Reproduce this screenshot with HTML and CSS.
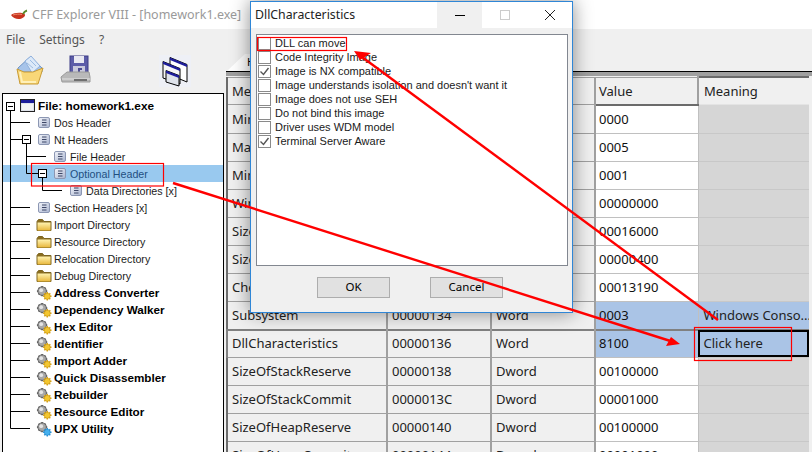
FILE: index.html
```html
<!DOCTYPE html>
<html lang="en">
<head>
    <meta charset="UTF-8">
    <title>CFF Explorer VIII - [homework1.exe]</title>
    <link rel="stylesheet" href="styles.css">
</head>
<body>
    <svg class="defs" width="0" height="0">
        <defs>
            <linearGradient id="docFill" x1="0" y1="0" x2="1" y2="1">
                <stop offset="0" stop-color="#f4f6fb"/>
                <stop offset="1" stop-color="#a9b4cf"/>
            </linearGradient>
            <linearGradient id="folderFill" x1="0" y1="0" x2="0" y2="1">
                <stop offset="0" stop-color="#fff3b0"/>
                <stop offset="1" stop-color="#e8b73c"/>
            </linearGradient>
            <symbol id="doc" viewBox="0 0 12 11">
                <rect x="0.5" y="0.5" width="11" height="10" rx="1.5" fill="url(#docFill)" stroke="#8c97b3"/>
                <path d="M4 3h4.500M4 5.500h4.500M4 8h4.500" stroke="#3d4666" stroke-width="1"/>
            </symbol>
            <symbol id="folder" viewBox="0 0 16 14">
                <path d="M1 3.500V12.500H15V3.500H8L6.500 1.500H2.500Z" fill="#8a6d1f" stroke="#7c6420"/>
                <rect x="1.500" y="4.500" width="13" height="8" fill="url(#folderFill)"/>
            </symbol>
            <symbol id="tool" viewBox="0 0 17 17">
                <path d="M6.500 1v11M1 6.500h11M2.700 2.700l7.600 7.600M10.300 2.700l-7.600 7.600" stroke="#6e6e6e" stroke-width="2"/>
                <circle cx="6.500" cy="6.500" r="4.500" fill="#a8a8a8" stroke="#5a5a5a"/>
                <circle cx="5.500" cy="5.500" r="2" fill="#e4e4e4"/>
                <path d="M12 7.500v9M7.500 12h9M8.800 8.800l6.400 6.400M15.200 8.800l-6.400 6.400" stroke="#e0a91a" stroke-width="1.600"/>
                <circle cx="12" cy="12" r="3.200" fill="#f4c62e" stroke="#b98a10" stroke-width="0.600"/>
            </symbol>
            <symbol id="toolBlue" viewBox="0 0 17 17">
                <path d="M6.500 1v11M1 6.500h11M2.700 2.700l7.600 7.600M10.300 2.700l-7.600 7.600" stroke="#6e6e6e" stroke-width="2"/>
                <circle cx="6.500" cy="6.500" r="4.500" fill="#a8a8a8" stroke="#5a5a5a"/>
                <circle cx="5.500" cy="5.500" r="2" fill="#e4e4e4"/>
                <path d="M12 7.500v9M7.500 12h9M8.800 8.800l6.400 6.400M15.200 8.800l-6.400 6.400" stroke="#2b97dc" stroke-width="1.600"/>
                <circle cx="12" cy="12" r="3.200" fill="#45b0ee" stroke="#1c7cc0" stroke-width="0.600"/>
            </symbol>
        </defs>
    </svg>

    <div class="app">
        <header class="titlebar">
            <svg class="chili" width="18" height="12" viewBox="0 0 18 12">
                <path d="M1 6C3 4 8 3.500 12 4C15 4.500 16 6 14 8C11 11 4 11 1 6Z" fill="#c8341f"/>
                <path d="M3 6C6 5 9 5 12 5.500" stroke="#ee8a6a" fill="none"/>
                <path d="M13 5C14 3 15 2 17 1.500" stroke="#5a8a2a" stroke-width="2" fill="none"/>
            </svg>
            <span>CFF Explorer VIII - [homework1.exe]</span>
        </header>

        <nav class="menubar">
            <span>File</span>
            <span>Settings</span>
            <span>?</span>
        </nav>

        <div class="main">
            <aside class="side">
                <div class="toolbar">
                    <svg class="tool-open" width="28" height="30" viewBox="0 0 28 30">
                        <path d="M2 13L14 2L26 13V17H2Z" fill="#a7c4ea" stroke="#6f95c6"/>
                        <path d="M9 6L15 1L24 11L16 18Z" fill="#dce9f8" stroke="#8fb0dc"/>
                        <path d="M14 5L20 11M11 8L17 13" stroke="#9dbce2"/>
                        <path d="M1 14L4 29H22L27 13L17 17H8Z" fill="#f8d778" stroke="#c99b35"/>
                        <path d="M4 17L6 27H20" fill="none" stroke="#fff0b8" stroke-width="2"/>
                    </svg>
                    <svg class="tool-save" width="32" height="30" viewBox="0 0 32 30">
                        <rect x="10" y="1" width="18" height="20" fill="#5c5ca8" stroke="#3d3d85"/>
                        <rect x="14" y="1" width="10" height="7" fill="#e9e9f2"/>
                        <rect x="13" y="11" width="12" height="10" fill="#c9c9dc"/>
                        <path d="M18 13h4v2h-2v4h-2Z" fill="#4c4c92"/>
                        <path d="M1 22L7 17H29L30 22V27H2Z" fill="#b9b9b9" stroke="#9a9a9a"/>
                        <path d="M2 24H30" stroke="#e2e2e2"/>
                        <path d="M14 25h13" stroke="#6f6f6f" stroke-width="2"/>
                    </svg>
                    <svg class="tool-windows" width="32" height="32" viewBox="0 0 32 32">
                        <rect width="32" height="32" fill="#eef0f6"/>
                        <path d="M11 2.500L28 9.500V27L11 20Z" fill="#fff" stroke="#000"/>
                        <path d="M11 2.500L28 9.500V12L11 5Z" fill="#1d1d9a"/>
                        <path d="M4 6.500L21 13.500V29L4 23Z" fill="#f6f6f6" stroke="#000"/>
                        <path d="M4 6.500L21 13.500V16L4 9Z" fill="#1d1d9a"/>
                        <path d="M7 15.500L20 20.500V31L7 27Z" fill="#dfe3ea" stroke="#000"/>
                        <path d="M7 15.500L20 20.500V23L7 18Z" fill="#1d1d9a"/>
                    </svg>
                </div>

                <div class="tree">
                    <div class="node node-file">
                        <svg class="ico-file" width="15" height="13" viewBox="0 0 15 13">
                            <rect x="0.500" y="0.500" width="14" height="12" fill="#dfe3ea" stroke="#222"/>
                            <rect x="1" y="1" width="13" height="3" fill="#1d1d9a"/>
                            <rect x="2" y="5" width="11" height="6" fill="#f4f4f4"/>
                        </svg>
                        <b>File: homework1.exe</b>
                    </div>
                    <div class="node lvl-1"><svg class="ico-doc"><use href="#doc"/></svg>Dos Header</div>
                    <div class="node lvl-1"><svg class="ico-doc"><use href="#doc"/></svg>Nt Headers</div>
                    <div class="node lvl-2"><svg class="ico-doc"><use href="#doc"/></svg>File Header</div>
                    <div class="node lvl-2 selected"><svg class="ico-doc"><use href="#doc"/></svg>Optional Header</div>
                    <div class="node lvl-3"><svg class="ico-doc"><use href="#doc"/></svg>Data Directories [x]</div>
                    <div class="node lvl-1"><svg class="ico-doc"><use href="#doc"/></svg>Section Headers [x]</div>
                    <div class="node lvl-0"><svg class="ico-16"><use href="#folder"/></svg>Import Directory</div>
                    <div class="node lvl-0"><svg class="ico-16"><use href="#folder"/></svg>Resource Directory</div>
                    <div class="node lvl-0"><svg class="ico-16"><use href="#folder"/></svg>Relocation Directory</div>
                    <div class="node lvl-0"><svg class="ico-16"><use href="#folder"/></svg>Debug Directory</div>
                    <div class="node lvl-0 bold"><svg class="ico-16"><use href="#tool"/></svg>Address Converter</div>
                    <div class="node lvl-0 bold"><svg class="ico-16"><use href="#tool"/></svg>Dependency Walker</div>
                    <div class="node lvl-0 bold"><svg class="ico-16"><use href="#tool"/></svg>Hex Editor</div>
                    <div class="node lvl-0 bold"><svg class="ico-16"><use href="#tool"/></svg>Identifier</div>
                    <div class="node lvl-0 bold"><svg class="ico-16"><use href="#tool"/></svg>Import Adder</div>
                    <div class="node lvl-0 bold"><svg class="ico-16"><use href="#tool"/></svg>Quick Disassembler</div>
                    <div class="node lvl-0 bold"><svg class="ico-16"><use href="#tool"/></svg>Rebuilder</div>
                    <div class="node lvl-0 bold"><svg class="ico-16"><use href="#tool"/></svg>Resource Editor</div>
                    <div class="node lvl-0 bold"><svg class="ico-16"><use href="#toolBlue"/></svg>UPX Utility</div>

                    <!-- connector lines, page coordinates -->
                    <svg class="tree-lines" viewBox="3 94 220 358">
                        <path d="M10.500 110V428.500M10.500 122.500H30M10.500 139.500H22M10.500 207.500H30M10.500 224.500H30M10.500 241.500H30M10.500 258.500H30M10.500 275.500H30M10.500 292.500H30M10.500 309.500H30M10.500 326.500H30M10.500 343.500H30M10.500 360.500H30M10.500 377.500H30M10.500 394.500H30M10.500 411.500H30M10.500 428.500H30" stroke="#000" fill="none"/>
                        <path d="M26.500 144V173.500H38M26.500 156.500H46M42.500 177V190.500H62" stroke="#000" fill="none"/>
                        <g fill="#fff" stroke="#000">
                            <rect x="6.500" y="102.500" width="8" height="8"/>
                            <rect x="22.500" y="135.500" width="8" height="8"/>
                            <rect x="38.500" y="169.500" width="8" height="8"/>
                        </g>
                        <path d="M8 106.500h5M24 139.500h5M40 173.500h5" stroke="#000"/>
                    </svg>
                </div>
            </aside>

            <section class="content">
                <div class="tabstrip">
                    <div class="tab">Header</div>
                </div>
                <div class="grid-top"></div>
                <table class="grid">
                    <colgroup>
                        <col class="col-member"><col class="col-offset"><col class="col-size"><col class="col-value"><col class="col-meaning">
                    </colgroup>
                    <thead>
                        <tr><th>Member</th><th>Offset</th><th>Size</th><th class="val">Value</th><th class="pressed">Meaning</th></tr>
                    </thead>
                    <tbody>
                        <tr><td>MinorImageVersion</td><td>0000011E</td><td>Word</td><td class="val">0000</td><td class="mean"></td></tr>
                        <tr><td>MajorSubsystemVersion</td><td>00000120</td><td>Word</td><td class="val">0005</td><td class="mean"></td></tr>
                        <tr><td>MinorSubsystemVersion</td><td>00000122</td><td>Word</td><td class="val">0001</td><td class="mean"></td></tr>
                        <tr><td>Win32VersionValue</td><td>00000124</td><td>Dword</td><td class="val">00000000</td><td class="mean"></td></tr>
                        <tr><td>SizeOfImage</td><td>00000128</td><td>Dword</td><td class="val">00016000</td><td class="mean"></td></tr>
                        <tr><td>SizeOfHeaders</td><td>0000012C</td><td>Dword</td><td class="val">00000400</td><td class="mean"></td></tr>
                        <tr><td>CheckSum</td><td>00000130</td><td>Dword</td><td class="val">00013190</td><td class="mean"></td></tr>
                        <tr class="marked"><td>Subsystem</td><td>00000134</td><td>Word</td><td class="val">0003</td><td class="mean">Windows Conso...</td></tr>
                        <tr class="marked current"><td>DllCharacteristics</td><td>00000136</td><td>Word</td><td class="val">8100</td><td class="mean focus">Click here</td></tr>
                        <tr><td>SizeOfStackReserve</td><td>00000138</td><td>Dword</td><td class="val">00100000</td><td class="mean"></td></tr>
                        <tr><td>SizeOfStackCommit</td><td>0000013C</td><td>Dword</td><td class="val">00001000</td><td class="mean"></td></tr>
                        <tr><td>SizeOfHeapReserve</td><td>00000140</td><td>Dword</td><td class="val">00100000</td><td class="mean"></td></tr>
                        <tr><td>SizeOfHeapCommit</td><td>00000144</td><td>Dword</td><td class="val">00001000</td><td class="mean"></td></tr>
                    </tbody>
                </table>
            </section>
        </div>
    </div>

    <div class="dialog">
        <div class="dialog-title">
            <span class="dialog-name">DllCharacteristics</span>
            <div class="winbtns">
                <div class="winbtn minimize"><svg width="12" height="12" viewBox="0 0 12 12"><path d="M1 6.500H11" stroke="#000"/></svg></div>
                <div class="winbtn"><svg width="12" height="12" viewBox="0 0 12 12"><rect x="1.500" y="1.500" width="9" height="9" fill="none" stroke="#ccc"/></svg></div>
                <div class="winbtn"><svg width="12" height="12" viewBox="0 0 12 12"><path d="M1 1L11 11M11 1L1 11" stroke="#222"/></svg></div>
            </div>
        </div>
        <div class="dialog-body">
            <div class="checklist">
                <label class="check"><i class="box"></i>DLL can move</label>
                <label class="check"><i class="box"></i>Code Integrity Image</label>
                <label class="check"><i class="box on"><svg width="11" height="11" viewBox="0 0 11 11"><path d="M1.500 5.500L4.500 8.500L9.500 2" fill="none" stroke="#555" stroke-width="1.400"/></svg></i>Image is NX compatible</label>
                <label class="check"><i class="box"></i>Image understands isolation and doesn't want it</label>
                <label class="check"><i class="box"></i>Image does not use SEH</label>
                <label class="check"><i class="box"></i>Do not bind this image</label>
                <label class="check"><i class="box"></i>Driver uses WDM model</label>
                <label class="check"><i class="box on"><svg width="11" height="11" viewBox="0 0 11 11"><path d="M1.500 5.500L4.500 8.500L9.500 2" fill="none" stroke="#555" stroke-width="1.400"/></svg></i>Terminal Server Aware</label>
            </div>
            <div class="dialog-actions">
                <div class="btn">OK</div>
                <div class="btn">Cancel</div>
            </div>
        </div>
    </div>

    <!-- red annotations drawn on top of the screenshot -->
    <svg class="notes" width="812" height="452" viewBox="0 0 812 452">
        <g fill="none" stroke="#f00" stroke-width="1.200">
            <rect x="31.500" y="163.500" width="132" height="22.500"/>
            <rect x="257.500" y="37.500" width="89" height="13"/>
            <rect x="694.500" y="327.500" width="97" height="33"/>
        </g>
        <g stroke="#f00" stroke-width="2.400">
            <path d="M173 183L672 341.500"/>
            <path d="M718 320L362 57"/>
        </g>
        <path d="M680 344L666 346L671 337Z" fill="#f00"/>
        <path d="M354 51L371 53L360 60Z" fill="#f00"/>
    </svg>
</body>
</html>
```

FILE: styles.css
```css
html, body {
    margin: 0;
    height: 452px;
    overflow: hidden;
}

body {
    position: relative;
    background: #f0f0f0;
    color: #000;
    font-family: "Noto Sans", "Liberation Sans", sans-serif;
}

.defs {
    position: absolute;
}

.app {
    display: flex;
    flex-direction: column;
    height: 452px;
}

.titlebar {
    height: 29px;
    flex: none;
    display: flex;
    align-items: center;
    gap: 4px;
    padding-left: 10px;
    background: #fff;
    color: #9a9a9a;
    font-size: 12.500px;
}

.menubar {
    height: 21px;
    flex: none;
    display: flex;
    align-items: center;
    gap: 14px;
    padding-left: 6px;
    color: #555;
    font-size: 12px;
}

.main {
    flex: 1;
    display: flex;
    min-height: 0;
}

.side {
    width: 224px;
    flex: none;
    display: flex;
    flex-direction: column;
    padding-left: 2px;
    box-sizing: border-box;
}

.toolbar {
    height: 43px;
    flex: none;
    display: flex;
    align-items: flex-start;
    padding-top: 5px;
    box-sizing: border-box;
}

.tool-open {
    margin-left: 14px;
}

.tool-save {
    margin-left: 16px;
}

.tool-windows {
    margin-left: 67px;
}

.tree {
    position: relative;
    flex: 1;
    background: #fff;
    border: 1px solid #000;
    border-bottom: none;
    padding-top: 3px;
    font-family: "Liberation Sans", sans-serif;
    font-size: 10.700px;
    color: #1a1a1a;
}

.tree-lines {
    position: absolute;
    left: 0;
    top: 0;
    width: 220px;
    height: 358px;
}

.node {
    height: 17px;
    display: flex;
    align-items: center;
    white-space: nowrap;
}

.node-file {
    padding-left: 17px;
    gap: 3px;
    color: #000;
    font-size: 11.800px;
}

.lvl-0 {
    padding-left: 33px;
}

.lvl-1 {
    padding-left: 35px;
}

.lvl-2 {
    padding-left: 51px;
}

.lvl-3 {
    padding-left: 67px;
}

.bold {
    font-weight: bold;
    font-size: 11.700px;
    color: #000;
}

.selected {
    background: #99c9ef;
    color: #1f4f7f;
}

.ico-doc {
    width: 12px;
    height: 11px;
    margin-right: 4px;
    flex: none;
}

.ico-16 {
    width: 16px;
    height: 16px;
    margin-right: 2px;
    flex: none;
}

.content {
    flex: 1;
    min-width: 0;
    padding-left: 2px;
    overflow: hidden;
}

.tabstrip {
    height: 22px;
    box-sizing: border-box;
    border-bottom: 1px solid #000;
    padding: 4px 0 0 1px;
}

.tab {
    width: 80px;
    height: 17px;
    padding-left: 20px;
    box-sizing: border-box;
    background: #fff;
    font-size: 11px;
    clip-path: polygon(0 100%, 18px 0, 100% 0, 100% 100%);
}

.grid-top {
    height: 4px;
    background: #a0a0a0;
}

.grid {
    table-layout: fixed;
    width: 582px;
    border-collapse: collapse;
    border-left: 2px solid #6b6b6b;
    font-size: 13px;
    color: #222;
}

.col-member {
    width: 160px;
}

.col-offset,
.col-size {
    width: 104px;
}

.col-value {
    width: 103px;
}

.col-meaning {
    width: 111px;
}

th,
td {
    height: 27px;
    padding: 0 4px 0 4px;
    border-right: 2px solid #a0a0a0;
    border-bottom: 1px solid #a0a0a0;
    font-weight: normal;
    text-align: left;
    white-space: nowrap;
    overflow: hidden;
    background: #f0f0f0;
}

th {
    height: 26px;
    border-top: 1px solid #a0a0a0;
}

th.val {
    border-bottom: 2px solid #6b6b6b;
    padding-left: 3px;
}

th.pressed {
    border-left: 2px solid #6b6b6b;
    border-top: 2px solid #6b6b6b;
    border-bottom: 1px solid #e4e4e4;
    border-right: none;
    padding-left: 5px;
}

td.val {
    background: #fff;
    border-right: 1px solid #c0c0c0;
    border-bottom-color: #c0c0c0;
    border-left: 2px solid #6b6b6b;
    padding-left: 3px;
    color: #111;
}

td.mean {
    background: #d6d6d6;
    border-right: none;
    border-bottom-color: #c8c8c8;
    padding-left: 5px;
}

.marked td.val,
.marked td.mean {
    background: #aac4e6;
}

.current td {
    height: 25px;
    padding-bottom: 1px;
    border-top: 2px solid #808080;
}

.current td:first-child {
    border-left: 2px solid #808080;
}

.current td.focus {
    outline: 2px solid #000;
    outline-offset: -2px;
}

.dialog {
    position: absolute;
    left: 250px;
    top: 1px;
    width: 323px;
    height: 312px;
    box-sizing: border-box;
    display: flex;
    flex-direction: column;
    background: #f0f0f0;
    border: 1px solid #2f86d6;
    box-shadow: 0 0 18px rgba(0, 0, 0, 0.45);
}

.dialog-title {
    height: 26px;
    flex: none;
    display: flex;
    justify-content: space-between;
    background: #fff;
}

.dialog-name {
    padding: 4px 0 0 4px;
    font-size: 12.300px;
    color: #222;
}

.winbtns {
    display: flex;
}

.winbtn {
    width: 45px;
    height: 26px;
    display: flex;
    align-items: center;
    justify-content: center;
}

.minimize {
    background: #f0f0f0;
}

.dialog-body {
    flex: 1;
    padding: 6px 4px 0 5px;
    display: flex;
    flex-direction: column;
}

.checklist {
    height: 232px;
    flex: none;
    box-sizing: border-box;
    padding: 1px;
    background: #fff;
    border: 1px solid #828790;
    font-family: "Liberation Sans", sans-serif;
    font-size: 11px;
    color: #1a1a1a;
}

.check {
    height: 14px;
    display: flex;
    align-items: center;
    white-space: nowrap;
}

.box {
    width: 13px;
    height: 13px;
    box-sizing: border-box;
    margin-right: 4px;
    flex: none;
    border: 1px solid #8a8a8a;
    display: flex;
    align-items: center;
    justify-content: center;
}

.dialog-actions {
    display: flex;
    gap: 40px;
    padding: 11px 0 0 61px;
}

.btn {
    width: 73px;
    height: 21px;
    box-sizing: border-box;
    border: 1px solid #adadad;
    background: #e1e1e1;
    font-size: 11.500px;
    line-height: 18px;
    text-align: center;
}

.notes {
    position: absolute;
    left: 0;
    top: 0;
}
```
